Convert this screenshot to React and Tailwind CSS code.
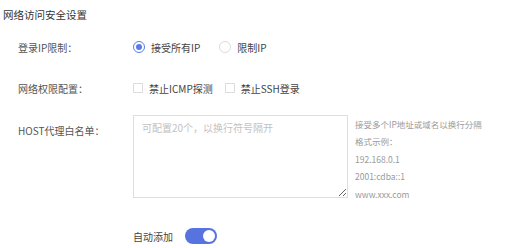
import React, { useState } from 'react';

const font = { fontFamily: '"Noto Sans CJK SC", "Noto Sans", sans-serif' };

const Radio = ({ checked, label, onClick }) => (
  <div className="flex items-center cursor-pointer" onClick={onClick}>
    <span
      className={`flex items-center justify-center w-[12px] h-[12px] rounded-full border ${
        checked ? 'border-[#5b7be6]' : 'border-[#dcdcdc]'
      }`}
    >
      {checked && <span className="w-[6px] h-[6px] rounded-full bg-[#5b7be6]" />}
    </span>
    <span className="ml-[6px] text-[10px] text-[#444]">{label}</span>
  </div>
);

const Checkbox = ({ label }) => (
  <div className="flex items-center">
    <span className="w-[10px] h-[10px] border border-[#dcdcdc] bg-white" />
    <span className="ml-[6px] text-[10px] text-[#444]">{label}</span>
  </div>
);

const App = () => {
  const [ipMode, setIpMode] = useState('all');
  const [autoAdd, setAutoAdd] = useState(true);

  return (
    <div className="w-[519px] h-[248px] bg-white overflow-hidden" style={font}>
      <div className="pl-[3px] pt-[9px] text-[10.5px] leading-[12px] text-[#333]">网络访问安全设置</div>

      <div className="pl-[18px]">
        <div className="flex items-center h-[20px] mt-[16px]">
          <div className="w-[115px] text-[10px] text-[#555]">登录IP限制：</div>
          <div className="flex items-center gap-[19px]">
            <Radio checked={ipMode === 'all'} label="接受所有IP" onClick={() => setIpMode('all')} />
            <Radio checked={ipMode === 'limit'} label="限制IP" onClick={() => setIpMode('limit')} />
          </div>
        </div>

        <div className="flex items-center h-[20px] mt-[21px]">
          <div className="w-[115px] text-[10px] text-[#555]">网络权限配置：</div>
          <div className="flex items-center gap-[12px]">
            <Checkbox label="禁止ICMP探测" />
            <Checkbox label="禁止SSH登录" />
          </div>
        </div>

        <div className="flex mt-[17px]">
          <div className="w-[115px] pt-[10px] text-[10px] leading-[12px] text-[#555]">HOST代理白名单：</div>
          <textarea
            className="w-[215px] h-[83px] border border-[#dedede] px-[8px] py-[5px] text-[10px] leading-[14px] text-[#444] placeholder:text-[#c2c2c2] outline-none"
            placeholder="可配置20个，以换行符号隔开"
          />
          <div className="ml-[7px] pt-[1px] text-[8.5px] leading-[17.4px] text-[#9a9a9a]">
            <div>接受多个IP地址或域名以换行分隔</div>
            <div>格式示例：</div>
            <div>192.168.0.1</div>
            <div>2001:cdba::1</div>
            <div>www.xxx.com</div>
          </div>
        </div>

        <div className="flex items-center h-[16px] mt-[25px] pl-[115px]">
          <span className="text-[10px] text-[#444]">自动添加</span>
          <button
            onClick={() => setAutoAdd(!autoAdd)}
            className={`ml-[12px] w-[32px] h-[16px] rounded-full flex items-center px-[2px] ${
              autoAdd ? 'bg-[#5673e0] justify-end' : 'bg-[#ccc] justify-start'
            }`}
          >
            <span className="w-[12px] h-[12px] rounded-full bg-white" />
          </button>
        </div>
      </div>
    </div>
  );
};

export default App;
